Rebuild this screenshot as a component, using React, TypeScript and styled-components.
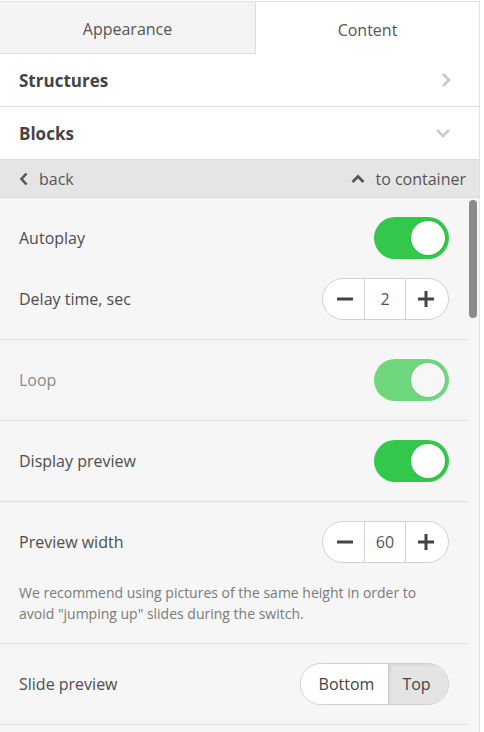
import styled, { createGlobalStyle } from 'styled-components'

const GlobalStyle = createGlobalStyle`
  html, body {
    margin: 0;
    padding: 0;
    background: #fff;
  }
  body {
    font-family: 'Open Sans', 'Liberation Sans', sans-serif;
    color: #4d4d4d;
  }
  * {
    box-sizing: border-box;
  }
`

const ChevronRight = () => (
  <svg width="10" height="16" viewBox="0 0 10 16">
    <path d="M2 2l6 6-6 6" fill="none" stroke="currentColor" strokeWidth="2.6" />
  </svg>
)

const ChevronDown = () => (
  <svg width="16" height="10" viewBox="0 0 16 10">
    <path d="M2 2l6 6 6-6" fill="none" stroke="currentColor" strokeWidth="2.6" />
  </svg>
)

const ChevronLeft = () => (
  <svg width="10" height="14" viewBox="0 0 10 14">
    <path d="M7.5 1.5L2.5 7l5 5.5" fill="none" stroke="currentColor" strokeWidth="2.6" />
  </svg>
)

const CaretUp = () => (
  <svg width="14" height="10" viewBox="0 0 14 10">
    <path d="M1.5 8L7 2.5 12.5 8" fill="none" stroke="currentColor" strokeWidth="2.8" />
  </svg>
)

const MinusIcon = () => (
  <svg width="16" height="16" viewBox="0 0 16 16">
    <rect x="0" y="6.5" width="16" height="3" fill="currentColor" />
  </svg>
)

const PlusIcon = () => (
  <svg width="16" height="16" viewBox="0 0 16 16">
    <rect x="0" y="6.5" width="16" height="3" fill="currentColor" />
    <rect x="6.5" y="0" width="3" height="16" fill="currentColor" />
  </svg>
)

interface ToggleProps {
  disabled?: boolean
}

const Toggle = ({ disabled }: ToggleProps) => (
  <ToggleTrack $disabled={disabled}>
    <ToggleKnob $disabled={disabled} />
  </ToggleTrack>
)

interface StepperProps {
  value: number
}

const Stepper = ({ value }: StepperProps) => (
  <StepperBox>
    <StepperButton>
      <MinusIcon />
    </StepperButton>
    <StepperValue>{value}</StepperValue>
    <StepperButton>
      <PlusIcon />
    </StepperButton>
  </StepperBox>
)

const App = () => {
  return (
    <>
      <GlobalStyle />
      <Panel>
        <Tabs>
          <Tab>Appearance</Tab>
          <Tab $active>Content</Tab>
        </Tabs>

        <SectionHeader>
          <span>Structures</span>
          <HeaderIcon>
            <ChevronRight />
          </HeaderIcon>
        </SectionHeader>
        <SectionHeader>
          <span>Blocks</span>
          <HeaderIcon>
            <ChevronDown />
          </HeaderIcon>
        </SectionHeader>

        <NavBar>
          <NavLink>
            <ChevronLeft />
            back
          </NavLink>
          <NavLink>
            <CaretUp />
            to container
          </NavLink>
        </NavBar>

        <Body>
          <List>
            <Group>
              <SettingRow>
                <Label>Autoplay</Label>
                <Toggle />
              </SettingRow>
              <SettingRow>
                <Label>Delay time, sec</Label>
                <Stepper value={2} />
              </SettingRow>
            </Group>

            <Group>
              <SettingRow>
                <Label $muted>Loop</Label>
                <Toggle disabled />
              </SettingRow>
            </Group>

            <Group>
              <SettingRow>
                <Label>Display preview</Label>
                <Toggle />
              </SettingRow>
            </Group>

            <Group>
              <SettingRow>
                <Label>Preview width</Label>
                <Stepper value={60} />
              </SettingRow>
              <Hint>
                We recommend using pictures of the same height in order to avoid "jumping up"
                slides during the switch.
              </Hint>
            </Group>

            <Group>
              <SettingRow>
                <Label>Slide preview</Label>
                <Segmented>
                  <Segment>Bottom</Segment>
                  <Segment $selected>Top</Segment>
                </Segmented>
              </SettingRow>
            </Group>

            <Group $last />
          </List>

          <ScrollTrack>
            <ScrollThumb />
          </ScrollTrack>
        </Body>
      </Panel>
    </>
  )
}

export default App

const Panel = styled.div`
  width: 480px;
  height: 732px;
  margin-top: 1px;
  border-top: 1px solid #e2e2e2;
  border-right: 1px solid #e2e2e2;
  display: flex;
  flex-direction: column;
  overflow: hidden;
  background: #fff;
`

const Tabs = styled.div`
  display: grid;
  grid-template-columns: 256px 1fr;
  height: 52px;
  flex-shrink: 0;
`

const Tab = styled.div<{ $active?: boolean }>`
  display: flex;
  align-items: center;
  justify-content: center;
  padding-top: 3px;
  font-size: 16px;
  color: #555;
  background: ${(p) => (p.$active ? '#fff' : '#f4f4f4')};
  border-right: ${(p) => (p.$active ? 'none' : '1px solid #dedede')};
  border-bottom: ${(p) => (p.$active ? 'none' : '1px solid #dedede')};
`

const SectionHeader = styled.div`
  display: flex;
  align-items: center;
  justify-content: space-between;
  height: 53px;
  flex-shrink: 0;
  padding: 0 28px 0 19px;
  border-bottom: 1px solid #dedede;
  font-size: 17px;
  font-weight: 700;
  color: #444;
`

const HeaderIcon = styled.span`
  display: flex;
  color: #c9c9c9;
`

const NavBar = styled.div`
  display: flex;
  align-items: center;
  justify-content: space-between;
  height: 38px;
  flex-shrink: 0;
  padding: 0 13px 0 19px;
  background: #e5e5e5;
  border-bottom: 1px solid #d9d9d9;
  font-size: 16px;
  color: #555;
`

const NavLink = styled.span`
  display: flex;
  align-items: center;
  gap: 10px;
  color: #555;
`

const Body = styled.div`
  flex: 1;
  display: flex;
  background: #f6f6f6;
  min-height: 0;
`

const List = styled.div`
  width: 468px;
  display: flex;
  flex-direction: column;
`

const Group = styled.div<{ $last?: boolean }>`
  display: flex;
  flex-direction: column;
  gap: 19px;
  padding: 19px;
  border-bottom: ${(p) => (p.$last ? 'none' : '1px solid #dedede')};
`

const SettingRow = styled.div`
  display: flex;
  align-items: center;
  justify-content: space-between;
  height: 42px;
`

const Label = styled.span<{ $muted?: boolean }>`
  font-size: 16px;
  color: ${(p) => (p.$muted ? '#8a8a8a' : '#4d4d4d')};
`

const ToggleTrack = styled.div<{ $disabled?: boolean }>`
  width: 75px;
  height: 42px;
  border-radius: 21px;
  background: ${(p) => (p.$disabled ? '#6fd87e' : '#33c84b')};
  display: flex;
  align-items: center;
  justify-content: flex-end;
  padding-right: 4px;
`

const ToggleKnob = styled.div<{ $disabled?: boolean }>`
  width: 34px;
  height: 34px;
  border-radius: 50%;
  background: ${(p) => (p.$disabled ? '#f7f7f7' : '#fff')};
  box-shadow: 0 0 0 1px rgba(0, 0, 0, 0.06);
`

const StepperBox = styled.div`
  display: grid;
  grid-template-columns: 41px 42px 42px;
  height: 42px;
  border: 1px solid #d2d2d2;
  border-radius: 21px;
  background: #fff;
  overflow: hidden;
`

const StepperButton = styled.div`
  display: flex;
  align-items: center;
  justify-content: center;
  color: #444;
  &:first-child {
    padding-left: 2px;
  }
  &:last-child {
    padding-right: 2px;
  }
`

const StepperValue = styled.div`
  display: flex;
  align-items: center;
  justify-content: center;
  border-left: 1px solid #d2d2d2;
  border-right: 1px solid #d2d2d2;
  font-size: 16px;
  color: #555;
`

const Hint = styled.p`
  margin: 0;
  max-width: 412px;
  font-size: 14px;
  line-height: 21px;
  color: #7a7a7a;
`

const Segmented = styled.div`
  display: grid;
  grid-template-columns: 87px 60px;
  height: 42px;
  border: 1px solid #cfcfcf;
  border-radius: 21px;
  overflow: hidden;
  background: #fff;
`

const Segment = styled.div<{ $selected?: boolean }>`
  display: flex;
  align-items: center;
  justify-content: center;
  padding: ${(p) => (p.$selected ? '0 4px 0 0' : '0 0 0 4px')};
  font-size: 16px;
  color: #444;
  background: ${(p) => (p.$selected ? '#e4e4e4' : '#fff')};
  box-shadow: ${(p) => (p.$selected ? 'inset 1px 1px 3px rgba(0,0,0,0.08)' : 'none')};
  border-left: ${(p) => (p.$selected ? '1px solid #cfcfcf' : 'none')};
`

const ScrollTrack = styled.div`
  flex: 1;
  padding: 2px 2px 0 1px;
`

const ScrollThumb = styled.div`
  width: 8px;
  height: 118px;
  border-radius: 4px;
  background: #8a8a8a;
`
